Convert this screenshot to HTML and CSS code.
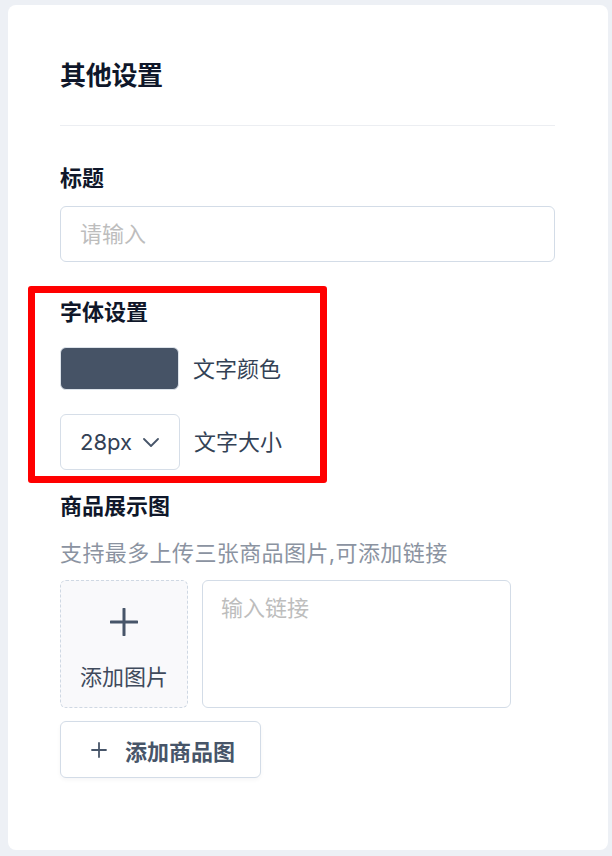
FILE: index.html
```html
<!DOCTYPE html>
<html lang="zh-CN">
<head>
  <meta charset="UTF-8">
  <meta name="viewport" content="width=device-width, initial-scale=1.0">
  <title>其他设置</title>
  <link rel="stylesheet" href="styles.css">
</head>
<body>
<div class="card">
  <h2 class="card-title">其他设置</h2>
  <div class="divider"></div>

  <label class="field-label" for="title">标题</label>
  <input class="text-input" id="title" type="text" placeholder="请输入">

  <div class="font-section">
    <div class="field-label">字体设置</div>
    <div class="font-row">
      <div class="swatch"></div>
      <span class="row-text">文字颜色</span>
    </div>
    <div class="font-row size-row">
      <button class="size-select" type="button">
        <span>28px</span>
        <svg width="16" height="9" viewBox="0 0 16 9" fill="none">
          <path d="M1 1l7 7 7-7" stroke="#475569" stroke-width="1.8" stroke-linecap="round" stroke-linejoin="round"/>
        </svg>
      </button>
      <span class="row-text">文字大小</span>
    </div>
  </div>

  <div class="field-label goods-label">商品展示图</div>
  <p class="hint">支持最多上传三张商品图片,可添加链接</p>

  <div class="goods-row">
    <div class="upload-box">
      <svg width="28" height="28" viewBox="0 0 28 28" fill="none">
        <path d="M14 1v26M1 14h26" stroke="#475569" stroke-width="3" stroke-linecap="round"/>
      </svg>
      <span>添加图片</span>
    </div>
    <textarea class="link-input" placeholder="输入链接"></textarea>
  </div>

  <button class="add-btn" type="button">
    <svg width="16" height="16" viewBox="0 0 16 16" fill="none">
      <path d="M8 1v14M1 8h14" stroke="#475569" stroke-width="1.8" stroke-linecap="round"/>
    </svg>
    <span>添加商品图</span>
  </button>
</div>
</body>
</html>
```

FILE: styles.css
```css
body {
    margin: 5px 4px 6px 8px;
    background-color: #edf0f5;
    font-family: Inter, "Noto Sans CJK SC", sans-serif;
    color: #0f172a;
}

.card {
    background-color: #ffffff;
    border-radius: 8px;
    padding: 53px 53px 72px 52px;
    height: 845px;
    box-sizing: border-box;
}

.card-title {
    margin: 0;
    font-size: 26px;
    line-height: 36px;
    font-weight: 700;
    letter-spacing: -0.3px;
}

.divider {
    height: 1px;
    background-color: #eceef2;
    margin: 31px 0 37px;
}

.field-label {
    display: block;
    font-size: 22px;
    line-height: 30px;
    font-weight: 600;
    color: #0f172a;
}

.text-input {
    display: block;
    width: 100%;
    height: 56px;
    margin-top: 13px;
    padding: 0 19px;
    box-sizing: border-box;
    border: 1px solid #d3dce7;
    border-radius: 6px;
    font-family: inherit;
    font-size: 22px;
    color: #334155;
    outline: none;
}

.text-input::placeholder,
.link-input::placeholder {
    color: #bdbdbd;
}

/* bloco marcado em vermelho */
.font-section {
    position: relative;
    margin-top: 35px;
}

.font-section::after {
    content: "";
    position: absolute;
    top: -11px;
    left: -32px;
    width: 299px;
    height: 197px;
    border: 7px solid #ff0000;
    border-radius: 3px;
    box-sizing: border-box;
    pointer-events: none;
}

.font-row {
    display: flex;
    align-items: center;
    gap: 14px;
    margin-top: 20px;
}

.size-row {
    margin-top: 24px;
}

.swatch {
    width: 119px;
    height: 43px;
    background-color: #465366;
    border: 1px solid #dde3ea;
    border-radius: 6px;
    box-sizing: border-box;
}

.row-text {
    font-size: 22px;
    line-height: 30px;
    color: #334155;
}

.size-select {
    display: flex;
    align-items: center;
    gap: 11px;
    width: 120px;
    height: 56px;
    padding: 0 0 0 19px;
    box-sizing: border-box;
    background: #ffffff;
    border: 1px solid #d6dee8;
    border-radius: 6px;
    font-family: inherit;
    font-size: 22px;
    color: #334155;
}

.goods-label {
    margin-top: 21px;
}

.hint {
    margin: 17px 0 0;
    font-size: 22px;
    line-height: 30px;
    letter-spacing: 0.4px;
    color: #8b93a1;
}

.goods-row {
    display: flex;
    gap: 14px;
    margin-top: 12px;
}

.upload-box {
    display: flex;
    flex-direction: column;
    align-items: center;
    width: 128px;
    height: 128px;
    padding-top: 27px;
    box-sizing: border-box;
    background-color: #f9f9fb;
    border: 1px dashed #cfd8e3;
    border-radius: 6px;
}

.upload-box span {
    margin-top: 26px;
    font-size: 22px;
    line-height: 30px;
    color: #3f4a5c;
}

.link-input {
    width: 309px;
    height: 128px;
    padding: 12px 18px;
    box-sizing: border-box;
    border: 1px solid #d3dce7;
    border-radius: 6px;
    font-family: inherit;
    font-size: 22px;
    line-height: 30px;
    resize: none;
    outline: none;
}

.add-btn {
    display: flex;
    align-items: center;
    gap: 18px;
    width: 201px;
    height: 57px;
    margin-top: 13px;
    padding: 0 0 0 30px;
    box-sizing: border-box;
    background: #ffffff;
    border: 1px solid #d3dce7;
    border-radius: 6px;
    box-shadow: 0 2px 4px rgba(15, 23, 42, 0.04);
    font-family: inherit;
    font-size: 22px;
    font-weight: 700;
    color: #475569;
}
```
